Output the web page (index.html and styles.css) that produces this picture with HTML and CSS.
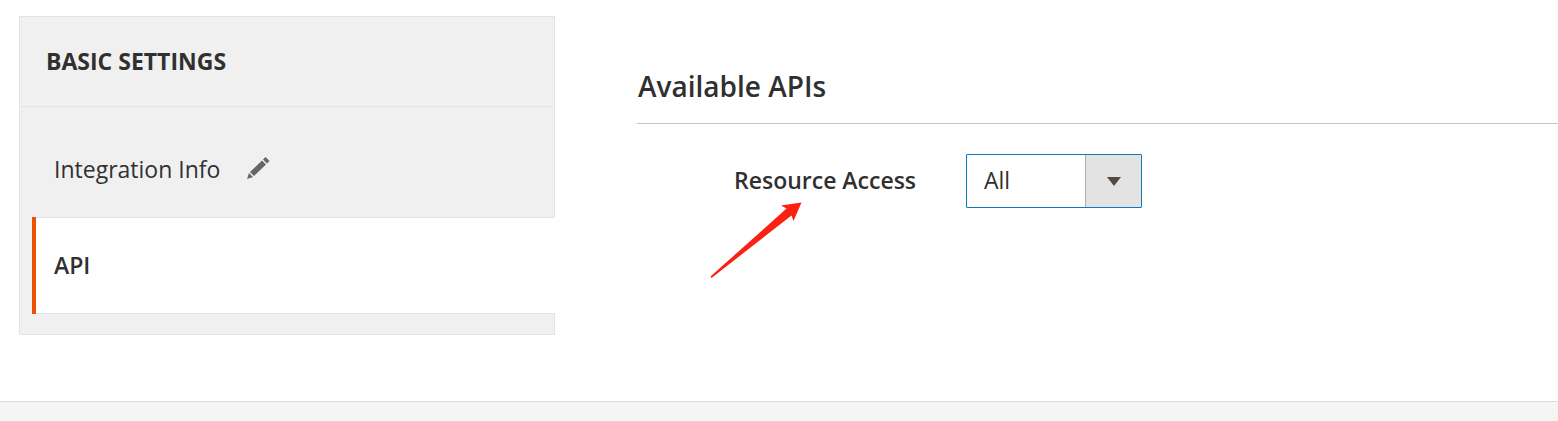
FILE: index.html
```html
<!DOCTYPE html>
<html lang="en">
<head>
<meta charset="utf-8">
<title>Integration</title>
<link rel="stylesheet" href="styles.css">
</head>
<body>
<div class="page">
  <main class="columns">
    <nav class="tabs">
      <h2 class="tabs-title"><span>BASIC SETTINGS</span></h2>
      <a class="tab tab-info"><span>Integration Info</span>
        <svg class="pencil" width="24" height="24" viewBox="0 0 24 24"><path d="M1 23l2-6 4 4zM4 16L16 4.500l4 4L8 20zM17 3.500L19.500 1l4 4L21 7.500z"/></svg>
      </a>
      <a class="tab tab-active"><span>API</span></a>
    </nav>
    <section class="content">
      <h1 class="section-title"><span>Available APIs</span></h1>
      <div class="field">
        <label class="field-label">Resource Access</label>
        <div class="select"><span class="select-value">All</span><span class="select-toggle"><svg width="14" height="9" viewBox="0 0 14 9"><path d="M0 0h14L7 9z"/></svg></span></div>
        <svg class="arrow" width="94" height="78" viewBox="0 0 94 78"><path d="M.5 75.500L76.500 7.500 71 4.500 91.500 1.500 83.500 20 81.500 14.500 1.500 77z"/></svg>
      </div>
    </section>
  </main>
  <footer class="footer"></footer>
</div>
</body>
</html>
```
FILE: styles.css
```css
* { box-sizing: border-box; }
body { margin: 0; background: #fff; color: #303030; font-family: "Open Sans", sans-serif; }
.page { display: flex; flex-direction: column; height: 421px; overflow: hidden; }
.columns { display: flex; flex: 1; padding: 16px 0 0 19px; }
.tabs { width: 536px; height: 319px; background: #f0f0f0; border: 1px solid #e3e3e3; }
.tabs-title { margin: 0 1px 0 1px; height: 90px; padding: 0 0 2px 25px; display: flex; align-items: center; border-bottom: 1px solid #e3e3e3; font-size: 23px; font-weight: 700; white-space: nowrap; }
.tab { display: flex; align-items: center; font-size: 23px; white-space: nowrap; }
.tab-info { height: 110px; padding: 13px 0 0 34px; }
.pencil { margin: 0 0 2px 26px; fill: #666; }
.tab-active { margin: 0 -1px 0 12px; height: 97px; padding: 0 0 2px 22px; background: #fff; border: solid #e3e3e3; border-width: 1px 0; font-weight: 600; position: relative; }
.tab-active::before { content: ""; position: absolute; left: 0; top: -1px; bottom: -1px; width: 4px; background: #eb5202; }
.content { flex: 1; margin-left: 82px; }
.section-title { margin: 0; height: 108px; padding: 50px 0 0 1px; border-bottom: 1px solid #c6c3b8; font-size: 28px; font-weight: 600; line-height: 40px; }
.field { position: relative; display: flex; align-items: center; padding: 30px 0 0 97px; }
.field-label { width: 232px; padding-bottom: 2px; font-size: 23px; font-weight: 600; white-space: nowrap; }
.select { display: flex; width: 176px; height: 54px; border: 1px solid #0f7abb; border-radius: 1px; }
.select-value { flex: 1; padding-left: 17px; line-height: 51px; font-size: 23px; }
.select-toggle { width: 56px; padding-left: 1px; display: flex; align-items: center; justify-content: center; background: #e3e3e3; border-left: 1px solid #adadad; }
.select-toggle svg { fill: #514943; }
.arrow { position: absolute; left: 73px; top: 77px; fill: #fc1f14; }
.footer { height: 20px; background: #f5f5f5; border-top: 1px solid #dcdcdc; }
```
